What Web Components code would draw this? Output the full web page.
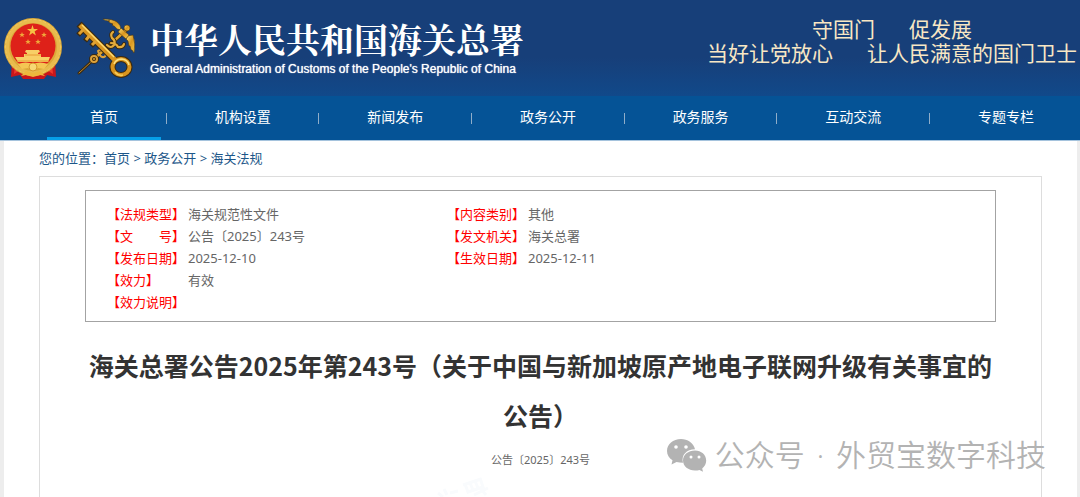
<!DOCTYPE html>
<html lang="zh-CN">
<head>
<meta charset="utf-8">
<meta name="viewport" content="width=device-width, initial-scale=1">
<title>中华人民共和国海关总署</title>
<style>
  body {
    margin: 0;
    font-family: "Noto Sans", "Noto Sans CJK SC", sans-serif;
    color: #666;
    background: #fff;
  }
</style>
</head>
<body>
<customs-page>
  <site-header slot="header"></site-header>
  <site-nav slot="nav"></site-nav>
  <bread-crumb></bread-crumb>
  <notice-article>
    <meta-box slot="meta">
      <meta-field label="法规类型">海关规范性文件</meta-field>
      <meta-field label="内容类别">其他</meta-field>
      <meta-field label="文　　号">公告〔2025〕243号</meta-field>
      <meta-field label="发文机关">海关总署</meta-field>
      <meta-field label="发布日期">2025-12-10</meta-field>
      <meta-field label="生效日期">2025-12-11</meta-field>
      <meta-field class="wide" label="效力">有效</meta-field>
      <meta-field class="wide" label="效力说明"></meta-field>
    </meta-box>
    <span slot="title">海关总署公告2025年第243号（关于中国与新加坡原产地电子联网升级有关事宜的公告）</span>
    <span slot="number">公告〔2025〕243号</span>
  </notice-article>
  <account-mark slot="overlay">
    <span slot="kind">公众号</span>
    <span slot="account">外贸宝数字科技</span>
  </account-mark>
</customs-page>

<script>
class CustomsPage extends HTMLElement {
  constructor() {
    super();
    this.attachShadow({ mode: 'open' });
    this.shadowRoot.innerHTML = `
      <style>
        :host {
          display: flex;
          flex-direction: column;
          min-height: 100vh;
          position: relative;
        }
        main {
          flex: 1;
          display: flex;
          flex-direction: column;
          padding: 0 35px;
          border-left: 4px solid #ededed;
          border-right: 3px solid #ededed;
        }
      </style>
      <slot name="header"></slot>
      <slot name="nav"></slot>
      <main><slot></slot></main>
      <slot name="overlay"></slot>
    `;
  }
}

class NationalEmblem extends HTMLElement {
  constructor() {
    super();
    this.attachShadow({ mode: 'open' });
    this.shadowRoot.innerHTML = `
      <style>
        :host { display: block; }
        svg { display: block; }
      </style>
      <svg width="60" height="64" viewBox="3 16 60 64" role="img" aria-label="国徽">
        <path d="M12 61l-1 16 9-2 3 4h21l3-4 9 2-1-16z" fill="#c9161a"/>
        <path d="M15 64l-1 10 6-4zM52 64l1 10-6-4z" fill="#ee3a2c"/>
        <circle cx="33" cy="47" r="29" fill="#dca838"/>
        <circle cx="33" cy="47" r="26" fill="none" stroke="#e8bb4d" stroke-width="4"/>
        <circle cx="33" cy="47" r="27.500" fill="none" stroke="#f0cb62" stroke-width="1" stroke-dasharray="3 2"/>
        <circle cx="33" cy="46" r="22.500" fill="#de2119"/>
        <path d="M32.500 25l1.300 4h4.200l-3.400 2.500 1.300 4-3.400-2.500-3.400 2.500 1.300-4-3.400-2.500h4.200z" fill="#f6c244"/>
        <g fill="#f0a63a">
          <path d="M22 32l.8 2h2l-1.600 1.300.6 2-1.800-1.200-1.800 1.200.6-2-1.600-1.300h2z"/>
          <path d="M44 32l.8 2h2l-1.600 1.300.6 2-1.800-1.200-1.800 1.200.6-2-1.600-1.300h2z"/>
          <path d="M28 39l.8 2h2l-1.600 1.300.6 2-1.800-1.200-1.800 1.200.6-2-1.600-1.300h2z"/>
          <path d="M38 39l.8 2h2l-1.600 1.300.6 2-1.800-1.200-1.800 1.200.6-2-1.600-1.300h2z"/>
        </g>
        <path d="M26 50h13l1 2-2 1v1h3v3h9l-2 5H18l-3-5h9v-3h3v-1l-2-1z" fill="#f8cf66"/>
        <path d="M17 61h32M25 55h16" stroke="#e79a32"/>
        <path d="M18 64q8-3 15 0 7-3 15 0l-4 5-6-1-5 3-5-3-6 1z" fill="#f4c653"/>
        <circle cx="33" cy="67" r="4" fill="#f7d774" stroke="#d6982c"/>
        <path d="M21 76l5-5 7 2 7-2 5 5-5-1-7 2-7-2z" fill="#eeb83c"/>
      </svg>
    `;
  }
}

class CustomsBadge extends HTMLElement {
  constructor() {
    super();
    this.attachShadow({ mode: 'open' });
    this.shadowRoot.innerHTML = `
      <style>
        :host { display: block; }
        svg { display: block; }
      </style>
      <svg width="64" height="64" viewBox="75 18 64 64" role="img" aria-label="关徽">
        <defs>
          <linearGradient id="gold" x1="0" y1="0" x2="1" y2="1">
            <stop offset="0" stop-color="#fbe27a"/>
            <stop offset=".5" stop-color="#d9961f"/>
            <stop offset="1" stop-color="#f4c94d"/>
          </linearGradient>
        </defs>
        <!-- winged staff -->
        <g fill="none" stroke-linecap="round">
          <path d="M79 75L91 64" stroke="#3b2a10" stroke-width="3"/>
          <path d="M79 75L91 64" stroke="#b9852c" stroke-width="1"/>
          <path d="M93 62L126 32" stroke="#3b2a10" stroke-width="4"/>
          <path d="M93 62L126 32" stroke="#e0a42f" stroke-width="2.500"/>
          <path d="M113 34q-3 2-1 6 4 3 2 7-3 4-7 0M124 46q-1 4-6 3-2-4-7-4" stroke="#3b2a10" stroke-width="4"/>
          <path d="M113 34q-3 2-1 6 4 3 2 7-3 4-7 0M124 46q-1 4-6 3-2-4-7-4" stroke="#e3ab3c" stroke-width="2.200"/>
          <path d="M98 53q4-3 7 1 2 4-1 5-4 1-6-6" stroke="#dda23b" stroke-width="2"/>
          <circle cx="94" cy="61" r="3" stroke="#3b2a10" stroke-width="4"/>
          <circle cx="94" cy="61" r="3" stroke="#dda23b" stroke-width="2"/>
        </g>
        <g fill="url(#gold)" stroke="#4a3411" stroke-width=".6">
          <path d="M103 21q10 0 14 3 4 3 4 8l-4-1q-2-3-5-4l1-1q-4-1-5-3h2q-5 0-7-2z"/>
          <path d="M127 38l6-1q3 9 1 18l-2-3-1 0-1-4-1 0-1-5-2-2z"/>
          <path d="M121 30l8 7-3 4-8-7z"/>
          <circle cx="127" cy="30" r="3"/>
        </g>
        <!-- key -->
        <g fill="none">
          <path d="M79 26L113 60" stroke="#3b2a10" stroke-width="7"/>
          <path d="M84 31l-6 6M90 37l-5 6M96 43l-5 5" stroke="#3b2a10" stroke-width="5"/>
          <ellipse cx="121" cy="69" rx="8.500" ry="8" stroke="#3b2a10" stroke-width="6"/>
          <path d="M80 27L115 62" stroke="#d9951f" stroke-width="5"/>
          <path d="M84 31l-5 5M90 37l-4 5M96 43l-4 4" stroke="#e0a233" stroke-width="3"/>
          <path d="M82 27L114 59" stroke="#fbdb74" stroke-width="1.500"/>
          <ellipse cx="121" cy="69" rx="8.500" ry="8" stroke="#d9951f" stroke-width="4"/>
          <path d="M114 66q2-5 8-5 6 1 7 6" stroke="#fbe184" stroke-width="1.500"/>
          <path d="M115 74q3 4 8 3" stroke="#f6cc58" stroke-width="1.500"/>
        </g>
      </svg>
    `;
  }
}

class SiteHeader extends HTMLElement {
  constructor() {
    super();
    this.attachShadow({ mode: 'open' });
    this.shadowRoot.innerHTML = `
      <style>
        :host {
          display: block;
          background: linear-gradient(#173f79 60%, #11498a);
        }
        header {
          display: flex;
          align-items: center;
          min-height: 96px;
          padding: 0 3px;
          box-sizing: border-box;
        }
        customs-badge {
          margin: 0 11px 0 12px;
        }
        .name {
          color: #fff;
          white-space: nowrap;
        }
        h1 {
          margin: 0;
          font-family: "Noto Serif CJK SC", "Noto Sans CJK SC", serif;
          font-size: 34px;
          line-height: 42px;
          font-weight: 700;
        }
        .name p {
          margin: 0;
          font-family: "Liberation Sans", Arial, sans-serif;
          font-size: 12px;
          line-height: 18px;
          text-shadow: 0 0 1px #fff;
        }
        .slogan {
          margin-left: auto;
          margin-bottom: 12px;
          font-family: "Liberation Sans", "Noto Sans CJK SC", sans-serif;
          font-size: 21px;
          line-height: 24px;
          color: #f8e7c4;
          white-space: nowrap;
        }
        .slogan p {
          margin: 0;
          display: flex;
          justify-content: center;
          gap: 34px;
        }
      </style>
      <header>
        <national-emblem></national-emblem>
        <customs-badge></customs-badge>
        <div class="name">
          <h1>中华人民共和国海关总署</h1>
          <p>General Administration of Customs of the People's Republic of China</p>
        </div>
        <div class="slogan">
          <p><span>守国门</span><span>促发展</span></p>
          <p><span>当好让党放心</span><span>让人民满意的国门卫士</span></p>
        </div>
      </header>
    `;
  }
}

class SiteNav extends HTMLElement {
  constructor() {
    super();
    this.attachShadow({ mode: 'open' });
    const items = ['首页', '机构设置', '新闻发布', '政务公开', '政务服务', '互动交流', '专题专栏'];
    this.shadowRoot.innerHTML = `
      <style>
        :host {
          display: block;
          background: #055396;
          border-bottom: 1px solid #a5c3dd;
        }
        nav {
          display: flex;
          justify-content: space-between;
          align-items: center;
          padding: 0 3px 0 47px;
          font-size: 14px;
          white-space: nowrap;
        }
        a {
          padding: 0 43px;
          line-height: 41px;
          border-bottom: 3px solid transparent;
          color: #fff;
          text-decoration: none;
        }
        a.current {
          border-color: #069fe8;
        }
        i {
          width: 1px;
          height: 11px;
          background: #8fadc9;
        }
      </style>
      <nav>
        ${items.map((t, n) => `<a href="#"${n === 0 ? ' class="current"' : ''}>${t}</a>`).join('<i></i>')}
      </nav>
    `;
  }
}

class BreadCrumb extends HTMLElement {
  constructor() {
    super();
    this.attachShadow({ mode: 'open' });
    this.shadowRoot.innerHTML = `
      <style>
        :host {
          display: block;
          font-size: 13px;
          line-height: 35px;
          color: #1d5789;
        }
        a {
          color: inherit;
          text-decoration: none;
        }
      </style>
      <nav>您的位置：<a href="#">首页</a> &gt; <a href="#">政务公开</a> &gt; <a href="#">海关法规</a></nav>
    `;
  }
}

class MetaField extends HTMLElement {
  constructor() {
    super();
    this.attachShadow({ mode: 'open' });
    this.shadowRoot.innerHTML = `
      <style>
        :host {
          display: block;
        }
        :host(.wide) {
          grid-column: 1 / -1;
        }
        dl {
          display: grid;
          grid-template-columns: 81px 1fr;
          margin: 0;
        }
        dt {
          color: #f00;
          white-space: nowrap;
        }
        dd {
          margin: 0;
        }
      </style>
      <dl>
        <dt>【${this.getAttribute('label')}】</dt>
        <dd><slot></slot></dd>
      </dl>
    `;
  }
}

class MetaBox extends HTMLElement {
  constructor() {
    super();
    this.attachShadow({ mode: 'open' });
    this.shadowRoot.innerHTML = `
      <style>
        :host {
          display: grid;
          grid-template-columns: 340px 1fr;
          grid-auto-rows: 22px;
          padding: 12px 21px 8px;
          border: 1px solid #a3a3a3;
          font-size: 13px;
          line-height: 22px;
        }
      </style>
      <slot></slot>
    `;
  }
}

class NoticeArticle extends HTMLElement {
  constructor() {
    super();
    this.attachShadow({ mode: 'open' });
    this.shadowRoot.innerHTML = `
      <style>
        :host {
          display: flex;
          flex-direction: column;
          flex: 1;
          padding: 13px 45px 0;
          border: 1px solid #ddd;
          border-bottom: 0;
          text-align: center;
        }
        ::slotted(meta-box) {
          text-align: left;
        }
        h2 {
          margin: 18px 0 10px;
          font-family: "Noto Sans CJK SC", sans-serif;
          font-size: 25px;
          font-weight: 700;
          line-height: 50px;
          color: #333;
        }
        p {
          margin: 0;
          font-size: 11px;
          line-height: 20px;
        }
        svg {
          width: 60px;
          margin: auto 0 0 345px;
        }
      </style>
      <slot name="meta"></slot>
      <h2><slot name="title"></slot></h2>
      <p><slot name="number"></slot></p>
      <svg height="22" viewBox="0 0 60 22" fill="none" stroke="#f9fbfd" stroke-width="3" aria-hidden="true">
        <path d="M8 18l5 4M14 14l3 6M20 18l8-2"/>
        <path d="M33 10l18-6M35 9l3 8 15-5-3-9M40 8l3 7M45 6l3 7M44 20l14-7M51 14l5 6"/>
      </svg>
    `;
  }
}

class AccountMark extends HTMLElement {
  constructor() {
    super();
    this.attachShadow({ mode: 'open' });
    this.shadowRoot.innerHTML = `
      <style>
        :host {
          position: absolute;
          right: 34px;
          bottom: 20px;
          display: flex;
          align-items: center;
          gap: 8px;
          font-family: "Noto Sans", "Noto Sans CJK SC", sans-serif;
          font-size: 30px;
          font-weight: 350;
          line-height: 44px;
          color: #b3b3b3;
          white-space: nowrap;
        }
        .text {
          display: flex;
          gap: 12px;
        }
      </style>
      <svg width="40" height="33" viewBox="0 0 40 33" aria-hidden="true">
        <path d="M14 0C6 0 0 5.400 0 12c0 4 2 7 5.500 9.300L4.500 25.500l5-2.500q3 .8 6.500.8C14 16 19.500 10.500 28 10.300 26.500 4 20.500 0 14 0z" fill="#b3b3b3"/>
        <path d="M28 11.500c-6.700 0-12 4.300-12 10s5.300 10 12 10q2.500 0 4.500-.6l3.500 1.900-.8-3.400c2.500-2 4-4.600 4-7.900 0-5.700-5-10-11.200-10z" fill="#b3b3b3"/>
        <g fill="#fff">
          <circle cx="9" cy="8" r="1.800"/><circle cx="19" cy="8" r="1.800"/>
          <circle cx="24" cy="18" r="1.500"/><circle cx="32" cy="18" r="1.500"/>
        </g>
      </svg>
      <div class="text"><slot name="kind"></slot><span>·</span><slot name="account"></slot></div>
    `;
  }
}

customElements.define('customs-page', CustomsPage);
customElements.define('national-emblem', NationalEmblem);
customElements.define('customs-badge', CustomsBadge);
customElements.define('site-header', SiteHeader);
customElements.define('site-nav', SiteNav);
customElements.define('bread-crumb', BreadCrumb);
customElements.define('meta-field', MetaField);
customElements.define('meta-box', MetaBox);
customElements.define('notice-article', NoticeArticle);
customElements.define('account-mark', AccountMark);
</script>
</body>
</html>
